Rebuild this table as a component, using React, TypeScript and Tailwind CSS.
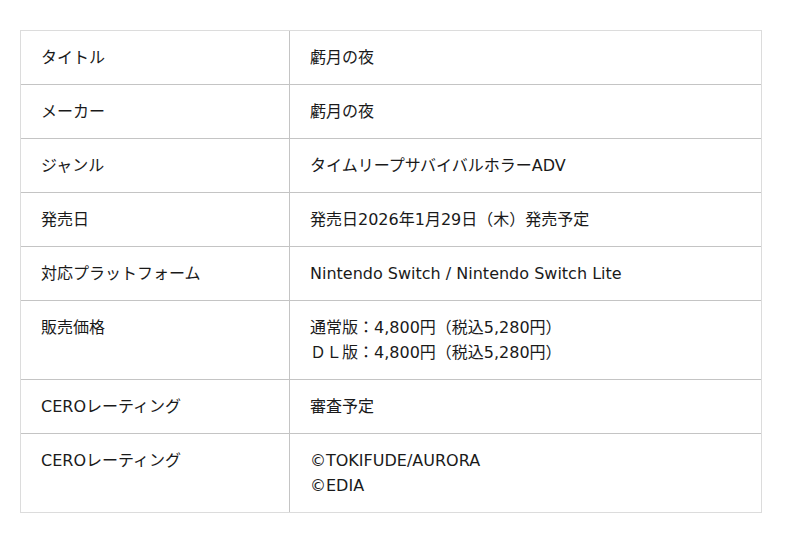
const rows: { label: string; value: string[] }[] = [
  { label: "タイトル", value: ["虧月の夜"] },
  { label: "メーカー", value: ["虧月の夜"] },
  { label: "ジャンル", value: ["タイムリープサバイバルホラーADV"] },
  { label: "発売日", value: ["発売日2026年1月29日（木）発売予定"] },
  { label: "対応プラットフォーム", value: ["Nintendo Switch / Nintendo Switch Lite"] },
  { label: "販売価格", value: ["通常版：4,800円（税込5,280円）", "ＤＬ版：4,800円（税込5,280円）"] },
  { label: "CEROレーティング", value: ["審査予定"] },
  { label: "CEROレーティング", value: ["©TOKIFUDE/AURORA", "©EDIA"] },
];

export default function App() {
  return (
    <div
      className="w-[800px] h-[543px] bg-white pt-[30px] pl-[20px] text-[16px] leading-[25px] text-[#1a1a1a]"
      style={{ fontFamily: '"DejaVu Sans", "Noto Sans CJK JP", sans-serif' }}
    >
      <div className="w-[742px] border border-[#dcdcdc]">
        {rows.map((row, i) => (
          <div
            key={i}
            className={`flex ${i > 0 ? "border-t border-[#c4c4c4]" : ""}`}
          >
            <div className="w-[269px] shrink-0 px-[20px] py-[14px] border-r border-[#c4c4c4]">
              {row.label}
            </div>
            <div className="flex-1 px-[20px] py-[14px]">
              {row.value.map((v, j) => (
                <div key={j}>{v}</div>
              ))}
            </div>
          </div>
        ))}
      </div>
    </div>
  );
}
